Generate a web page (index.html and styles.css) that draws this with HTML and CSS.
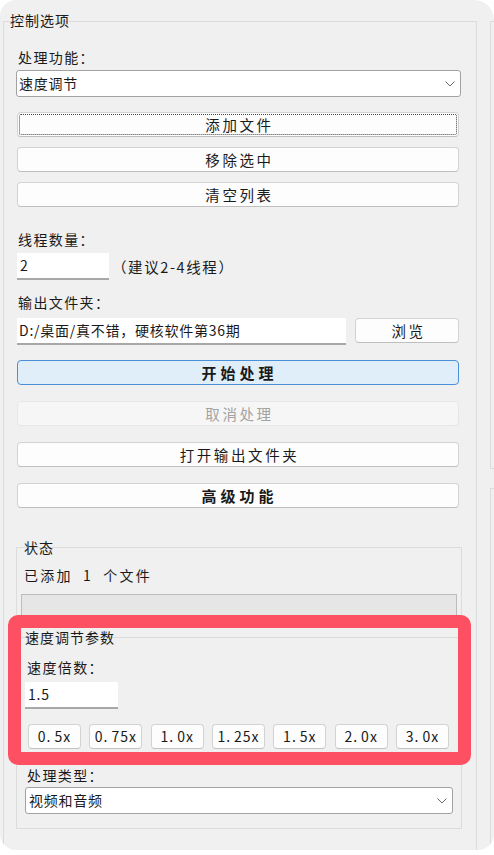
FILE: index.html
```html
<!DOCTYPE html>
<html lang="zh-CN">
<head>
<meta charset="utf-8">
<title>控制选项</title>
<link rel="stylesheet" href="styles.css">
</head>
<body>
<div class="window">
  <section class="group main">
    <div class="gtitle main-title">控制选项</div>
    <div class="label l-func">处理功能：</div>
    <div class="combo c-func"><span>速度调节</span><svg class="chev" width="10" height="6" viewBox="0 0 10 6"><path d="M0.5 0.5 L5 5 L9.5 0.5" fill="none" stroke="#6a6a6a" stroke-width="1"/></svg></div>
    <button class="btn focus b-add">添加文件</button>
    <button class="btn b-gap">移除选中</button>
    <button class="btn b-gap">清空列表</button>
    <div class="label l-thread">线程数量：</div>
    <div class="row r-thread"><div class="field f-thread">2</div><span class="hint">（建议2-4线程）</span></div>
    <div class="label l-out">输出文件夹：</div>
    <div class="row r-out"><div class="field f-path">D:/桌面/真不错，硬核软件第36期</div><button class="btn b-browse">浏览</button></div>
    <button class="btn primary bold b-start">开始处理</button>
    <button class="btn disabled b-gap2">取消处理</button>
    <button class="btn b-gap2">打开输出文件夹</button>
    <button class="btn bold b-gap2">高级功能</button>
    <section class="group sub status">
      <div class="gtitle">状态</div>
      <div class="status-text">已添加 1 个文件</div>
      <div class="progress"></div>
    </section>
    <section class="group sub speed">
      <div class="gtitle speed-title">速度调节参数</div>
      <div class="label l-speed">速度倍数：</div>
      <div class="field f-speed">1.5</div>
      <div class="presets">
        <button class="pbtn">0<span class="dot">.</span>5x</button>
        <button class="pbtn">0<span class="dot">.</span>75x</button>
        <button class="pbtn">1<span class="dot">.</span>0x</button>
        <button class="pbtn">1<span class="dot">.</span>25x</button>
        <button class="pbtn">1<span class="dot">.</span>5x</button>
        <button class="pbtn">2<span class="dot">.</span>0x</button>
        <button class="pbtn">3<span class="dot">.</span>0x</button>
      </div>
      <div class="label l-type">处理类型：</div>
      <div class="combo c-type"><span>视频和音频</span><svg class="chev" width="10" height="6" viewBox="0 0 10 6"><path d="M0.5 0.5 L5 5 L9.5 0.5" fill="none" stroke="#6a6a6a" stroke-width="1"/></svg></div>
    </section>
  </section>
  <aside class="side">
    <div class="group side-box1"></div>
    <div class="group side-box2"></div>
  </aside>
  <div class="highlight"></div>
</div>
</body>
</html>
```

FILE: styles.css
```css
* { box-sizing: border-box; }
html, body { margin: 0; padding: 0; background: #ffffff; }
body {
  font-family: "Noto Sans CJK SC", "Noto Sans", sans-serif;
  font-size: 14px;
  color: #1a1a1a;
}
.window {
  position: relative;
  width: 494px;
  height: 850px;
  background: #f0f0f0;
  border-radius: 16px 20px 16px 16px;
  overflow: hidden;
  display: flex;
  align-items: flex-start;
  padding-top: 21px;
}
.group { border: 1px solid #dcdcdc; }
.main {
  margin-left: 3px;
  width: 474px;
  height: 900px;
  padding: 0 16px 0 13px;
  display: flex;
  flex-direction: column;
  align-items: flex-start;
}
.gtitle {
  font-size: 14px;
  letter-spacing: 1px;
  line-height: 20px;
  height: 20px;
}
.main-title { margin-top: -12px; margin-left: -7px; }
.label {
  line-height: 20px;
  height: 20px;
  letter-spacing: 1.4px;
  margin-left: 1px;
}
.l-func { margin-top: 17px; }
.combo {
  display: flex;
  align-items: center;
  justify-content: space-between;
  background: #ffffff;
  border: 1px solid #a2a2a2;
  border-radius: 3px;
  height: 27px;
  line-height: 25px;
  letter-spacing: 0.75px;
}
.c-func { margin-top: 3px; margin-left: -1px; width: 445px; padding: 0 5px 0 2px; }
.chev { display: block; }
.btn {
  font: inherit;
  font-size: 14.5px;
  letter-spacing: 2.6px;
  padding: 0 0 0 3px;
  height: 25px;
  line-height: 23px;
  width: 442px;
  background: #fdfdfd;
  border: 1px solid #d3d3d3;
  border-bottom-color: #bfbfbf;
  border-radius: 4px;
  color: #1a1a1a;
  text-align: center;
  flex: none;
}
.focus { outline: 1px dotted #444444; outline-offset: -3px; }
.b-add { margin-top: 15px; }
.b-gap { margin-top: 10px; }
.l-thread { margin-top: 22px; }
.row { display: flex; align-items: center; margin-top: 4px; }
.field {
  background: #ffffff;
  height: 27px;
  line-height: 25px;
  border-bottom: 2px solid #a8a8a8;
  padding-left: 3px;
  letter-spacing: 0.75px;
  flex: none;
}
.f-thread { width: 92px; }
.hint { margin-left: 3px; font-size: 14.5px; letter-spacing: 1.6px; line-height: 20px; }
.l-out { margin-top: 12px; }
.r-out { margin-top: 6px; align-items: flex-start; }
.f-path { width: 329px; padding-left: 2px; }
.b-browse { width: 104px; margin-left: 9px; }
.primary { background: #e0eef9; border: 1px solid #4a90d9; }
.bold { font-weight: 700; font-size: 15px; letter-spacing: 4px; }
.b-start { margin-top: 15px; }
.b-gap2 { margin-top: 16px; }
.disabled { background: #f6f6f6; border-color: #e7e7e7; color: #a3a3a3; }

.sub {
  margin-left: -1px;
  width: 446px;
  display: flex;
  flex-direction: column;
  align-items: flex-start;
  flex: none;
}
.status { margin-top: 39px; padding: 0 0 8px 7px; }
.status .gtitle { margin-top: -11px; }
.status-text {
  margin-top: 8px;
  line-height: 20px;
  letter-spacing: 2.2px;
  word-spacing: 5px;
}
.progress {
  margin-top: 9px;
  margin-left: -3px;
  width: 436px;
  height: 24px;
  background: #e6e6e6;
  border: 1px solid #bcbcbc;
}
.speed { margin-top: 10px; padding: 0 0 14px 10px; }
.speed-title { margin-top: -11px; margin-left: -2px; }
.l-speed { margin-top: 10px; margin-left: 0; }
.f-speed { margin-top: 5px; margin-left: -2px; width: 93px; }
.presets {
  display: flex;
  gap: 8.33px;
  margin-top: 15px;
  margin-left: 1px;
}
.pbtn {
  font: inherit;
  font-size: 14px;
  letter-spacing: 1px;
  width: 53px;
  height: 25px;
  line-height: 23px;
  padding: 0;
  background: #fdfdfd;
  border: 1px solid #d3d3d3;
  border-bottom-color: #c2c2c2;
  border-radius: 4px;
  color: #1a1a1a;
  text-align: center;
}
.dot { margin-right: 3px; }
.l-type { margin-top: 16px; margin-left: 0; }
.c-type { margin-top: 2px; margin-left: -2px; width: 428px; padding: 0 5px 0 3px; }

.side {
  margin-left: 13px;
  flex: 1;
  display: flex;
  flex-direction: column;
}
.side-box1 { height: 448px; border-right: none; }
.side-box2 { margin-top: 19px; height: 500px; border-right: none; }

.highlight {
  position: absolute;
  left: 8px;
  top: 615px;
  width: 463px;
  height: 150px;
  border: 13px solid #fe5063;
  border-radius: 10px;
}
```
